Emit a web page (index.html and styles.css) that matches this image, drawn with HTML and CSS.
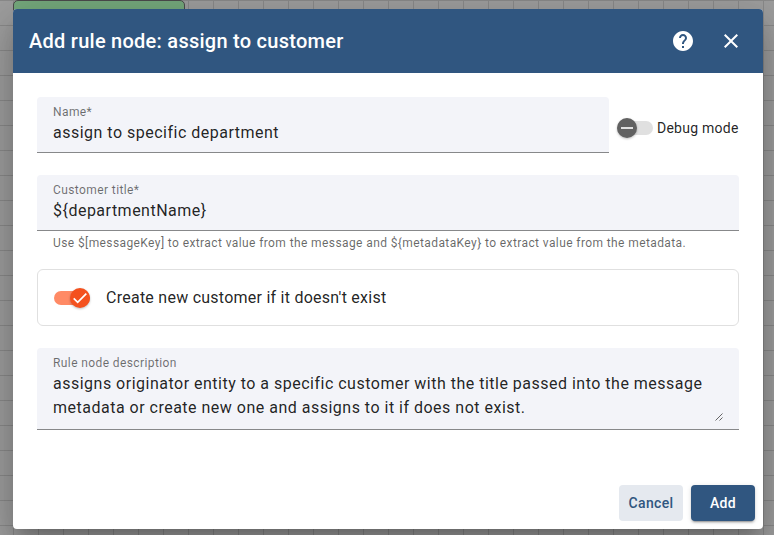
FILE: index.html
```html
<!DOCTYPE html>
<html lang="en">
<head>
<meta charset="utf-8">
<title>Add rule node</title>
<link rel="stylesheet" href="styles.css">
</head>
<body>
<div class="canvas-node"></div>
<main class="dialog">
  <header class="toolbar">
    <h2 class="title">Add rule node: assign to customer</h2>
    <svg class="icon" viewBox="0 0 24 24"><path fill="currentColor" d="M12 2C6.480 2 2 6.480 2 12s4.480 10 10 10 10-4.480 10-10S17.520 2 12 2zm1 17h-2v-2h2v2zm2.070-7.750l-.9.920C13.450 12.900 13 13.500 13 15h-2v-.5c0-1.100.45-2.100 1.170-2.830l1.240-1.260c.37-.36.59-.86.59-1.410 0-1.100-.9-2-2-2s-2 .9-2 2H8c0-2.210 1.790-4 4-4s4 1.790 4 4c0 .88-.36 1.680-.93 2.250z"/></svg>
    <svg class="icon" viewBox="0 0 24 24"><path fill="currentColor" d="M19 6.410L17.590 5 12 10.590 6.410 5 5 6.410 10.590 12 5 17.590 6.410 19 12 13.410 17.590 19 19 17.590 13.410 12z"/></svg>
  </header>
  <section class="content">
    <div class="name-row">
      <div class="field">
        <div class="label">Name*</div>
        <div class="value">assign to specific department</div>
      </div>
      <div class="debug">
        <svg class="switch" viewBox="0 0 36 22"><rect x="0" y="4" width="36" height="14" rx="7" fill="#e0e0e0"/><circle class="thumb" cx="10" cy="11" r="10" fill="#616161"/><path d="M4 11h12" stroke="#e0e0e0" stroke-width="2"/></svg>
        <span class="debug-text">Debug mode</span>
      </div>
    </div>
    <div class="field customer">
      <div class="label">Customer title*</div>
      <div class="value">${departmentName}</div>
    </div>
    <div class="hint">Use $[messageKey] to extract value from the message and ${metadataKey} to extract value from the metadata.</div>
    <div class="option">
      <svg class="switch" viewBox="0 0 36 22"><rect x="0" y="4" width="36" height="14" rx="7" fill="#ff8a65"/><circle class="thumb" cx="26" cy="11" r="10" fill="#f4511e"/><path d="M19.700 11.300l4 4 8.600-8.600" fill="none" stroke="#fff" stroke-width="1.700"/></svg>
      <span class="option-text">Create new customer if it doesn't exist</span>
    </div>
    <div class="field description">
      <div class="label">Rule node description</div>
      <div class="value">assigns originator entity to a specific customer with the title passed into the message<br>metadata or create new one and assigns to it if does not exist.</div>
      <svg class="grip" viewBox="0 0 8 8"><path d="M.5 7.500l7-7M4.500 7.500l3-3" stroke="#555" stroke-width=".9"/></svg>
    </div>
  </section>
  <footer class="actions">
    <button class="button cancel">Cancel</button>
    <button class="button add">Add</button>
  </footer>
</main>
</body>
</html>
```
FILE: styles.css
```css
* { box-sizing: border-box; }
body {
  margin: 0;
  width: 774px;
  height: 535px;
  padding: 9px 11px 6px 13px;
  overflow: hidden;
  font-family: Roboto, sans-serif;
  color: rgba(0, 0, 0, .87);
  background-color: #9e9e9e;
  background-image:
    linear-gradient(90deg, #8a8a8a 1px, transparent 1px),
    linear-gradient(#8a8a8a 1px, transparent 1px);
  background-size: 25px 25px;
  background-position: 13px 0;
}
.canvas-node {
  position: absolute;
  left: 13px;
  top: 0;
  width: 172px;
  height: 40px;
  border: 1px solid #4b4b4b;
  border-radius: 5px;
  background: #75a97c;
}
.dialog {
  position: relative;
  display: flex;
  flex-direction: column;
  width: 750px;
  height: 520px;
  overflow: hidden;
  border-radius: 4px;
  background: #fff;
  box-shadow: 0 11px 15px -7px rgba(0, 0, 0, .2), 0 24px 38px 3px rgba(0, 0, 0, .14), 0 9px 46px 8px rgba(0, 0, 0, .12);
}
.toolbar {
  display: flex;
  align-items: center;
  gap: 24px;
  height: 64px;
  padding: 0 20px 0 16px;
  color: #fff;
  background: #305680;
}
.title {
  flex: 1;
  margin: 0;
  font-size: 20px;
  line-height: 32px;
  font-weight: 500;
  letter-spacing: .26px;
  white-space: nowrap;
}
.icon { width: 24px; height: 24px; }
.content { flex: 1; padding: 24px 24px 0; }
.name-row { display: flex; gap: 8px; height: 56px; }
.field {
  position: relative;
  height: 56px;
  padding: 7px 16px 0;
  border-bottom: 1px solid #87888a;
  border-radius: 4px 4px 0 0;
  background: #f3f4f9;
}
.name-row .field { flex: none; width: 572px; }
.label {
  font-size: 12px;
  line-height: 16px;
  letter-spacing: .4px;
  color: rgba(0, 0, 0, .56);
}
.value {
  padding-top: 1px;
  font-size: 16px;
  line-height: 24px;
  letter-spacing: .495px;
  white-space: nowrap;
}
.debug { display: flex; align-items: center; height: 62px; gap: 4px; }
.switch { width: 36px; height: 22px; overflow: visible; flex: none; }
.thumb { filter: drop-shadow(0 1px 1px rgba(0, 0, 0, .25)); }
.debug-text {
  font-size: 14px;
  line-height: 20px;
  letter-spacing: .25px;
  white-space: nowrap;
}
.customer { margin-top: 22px; }
.hint {
  padding: 2px 16px 0;
  font-size: 12px;
  line-height: 20px;
  letter-spacing: .4px;
  white-space: nowrap;
  color: rgba(0, 0, 0, .6);
}
.option {
  display: flex;
  align-items: center;
  gap: 16px;
  height: 57px;
  margin-top: 16px;
  padding: 0 16px;
  border: 1px solid #e0e0e0;
  border-radius: 6px;
}
.option-text { font-size: 16px; line-height: 24px; letter-spacing: .25px; }
.description { height: 82px; margin-top: 22px; }
.grip {
  position: absolute;
  right: 16px;
  bottom: 8px;
  width: 8px;
  height: 8px;
}
.actions {
  display: flex;
  justify-content: flex-end;
  gap: 8px;
  padding: 8px;
}
.button {
  width: 64px;
  height: 36px;
  padding: 0;
  border: 0;
  border-radius: 4px;
  font: 500 14px/20px Roboto, sans-serif;
  letter-spacing: .35px;
}
.cancel { color: #305680; background: #e5e9ef; }
.add {
  color: #fff;
  background: #305680;
  box-shadow: 0 3px 1px -2px rgba(0, 0, 0, .2), 0 2px 2px rgba(0, 0, 0, .14), 0 1px 5px rgba(0, 0, 0, .12);
}
```
